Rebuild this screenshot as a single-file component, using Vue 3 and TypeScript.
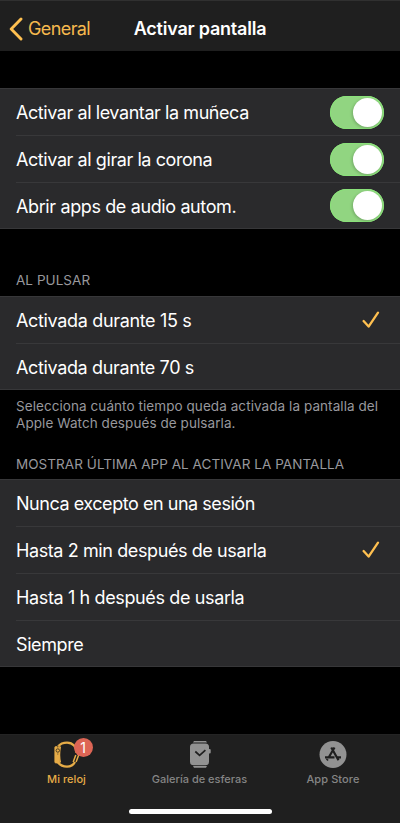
<script setup lang="ts">
import { ref } from 'vue'

interface Row { label: string; spacing: number }

const toggles = ref([
  { label: 'Activar al levantar la muñeca', spacing: -0.43, on: true },
  { label: 'Activar al girar la corona', spacing: -0.42, on: true },
  { label: 'Abrir apps de audio autom.', spacing: -0.38, on: true },
])
const durations: Row[] = [
  { label: 'Activada durante 15 s', spacing: -0.34 },
  { label: 'Activada durante 70 s', spacing: -0.36 },
]
const lastApp: Row[] = [
  { label: 'Nunca excepto en una sesión', spacing: -0.46 },
  { label: 'Hasta 2 min después de usarla', spacing: -0.4 },
  { label: 'Hasta 1 h después de usarla', spacing: -0.37 },
  { label: 'Siempre', spacing: -0.4 },
]
const duration = ref(0)
const resume = ref(1)
</script>

<template>
  <div class="screen">
    <header class="nav">
      <a class="back">
        <svg width="14" height="24" viewBox="0 0 14 24"><path d="M12 2 2.2 12 12 22" /></svg>
        <span>General</span>
      </a>
      <h1>Activar pantalla</h1>
    </header>
    <main>
      <section class="group first">
        <div v-for="t in toggles" :key="t.label" class="row" @click="t.on = !t.on">
          <span class="label" :style="{ letterSpacing: t.spacing + 'px' }">{{ t.label }}</span>
          <span class="switch" :class="{ on: t.on }"><i></i></span>
        </div>
      </section>
      <h2 class="h-press">AL PULSAR</h2>
      <section class="group">
        <div v-for="(r, i) in durations" :key="r.label" class="row" @click="duration = i">
          <span class="label" :style="{ letterSpacing: r.spacing + 'px' }">{{ r.label }}</span>
          <svg v-if="duration === i" class="check" width="18" height="18" viewBox="0 0 18 18"><path d="m1.6 10 5 5.6L16 1.6" /></svg>
        </div>
      </section>
      <p class="note">Selecciona cuánto tiempo queda activada la pantalla del<br>Apple Watch después de pulsarla.</p>
      <h2 class="h-last">MOSTRAR ÚLTIMA APP AL ACTIVAR LA PANTALLA</h2>
      <section class="group">
        <div v-for="(r, i) in lastApp" :key="r.label" class="row" @click="resume = i">
          <span class="label" :style="{ letterSpacing: r.spacing + 'px' }">{{ r.label }}</span>
          <svg v-if="resume === i" class="check" width="18" height="18" viewBox="0 0 18 18"><path d="m1.6 10 5 5.6L16 1.6" /></svg>
        </div>
      </section>
    </main>
    <footer>
      <nav class="tabs">
        <a class="tab active">
          <span class="icon">
            <svg width="28" height="28" viewBox="0 0 28 28" fill="none" stroke="#e6ac47">
              <path d="M5 6.500C7.500 3.500 10.500 2.600 14 2.600c6 0 9.600 4.500 9.600 10.500M5 22.500c2.500 3 5.500 4.100 9 4.100 4 0 6.500-1.800 8-4.600" stroke-width="2.300" />
              <path d="M7.500 6.500c-1.300 5-1.300 11 0 16" stroke-width="1.200" />
              <rect x="1.800" y="6.500" width="5" height="16.500" rx="1" fill="#e6ac47" stroke-width=".7" />
              <circle cx="4.800" cy="10.500" r="1.700" fill="#e6ac47" stroke="#3c321f" stroke-width=".9" />
              <path d="M4.800 5.500v2M4.800 13.500v1" stroke="#3c321f" stroke-width=".8" />
              <path d="m22.800 15-2.600 7M25.700 15l-2.600 7" stroke-width="1.500" />
            </svg>
            <b class="badge">1</b>
          </span>
          <span class="name mine">Mi reloj</span>
        </a>
        <a class="tab">
          <span class="icon">
            <svg width="28" height="28" viewBox="0 0 28 28" fill="#929292">
              <path d="M8 1h12l1 1.500H7zM7 26h14l-1 1.700H8z" />
              <rect x="4" y="3.500" width="19" height="21.700" rx="3.600" />
              <rect x="22.500" y="9" width="2.200" height="4.500" rx="1" />
              <path d="m9.300 11.500 4.300 3.800 5.800-5.200" fill="none" stroke="#1f1f1f" stroke-width="1.700" />
            </svg>
          </span>
          <span class="name gallery">Galería de esferas</span>
        </a>
        <a class="tab">
          <span class="icon">
            <svg width="28" height="28" viewBox="0 0 28 28">
              <circle cx="14" cy="14.500" r="13.500" fill="#929292" />
              <path d="m15.500 7.500-5.700 9.800M8.700 19.100l-.8 1.200M12.300 7.500l7.200 12.700M6 17.300h9.500M18.500 17.300H22" fill="none" stroke="#1f1f1f" stroke-width="2.200" />
            </svg>
          </span>
          <span class="name">App Store</span>
        </a>
      </nav>
      <div class="home"></div>
    </footer>
  </div>
</template>

<style>
body { margin: 0; background: #000; }
</style>

<style scoped>
.screen { width: 400px; height: 823px; display: flex; flex-direction: column; overflow: hidden; background: #000; color: #fff; font-family: Inter, "Liberation Sans", sans-serif; box-sizing: border-box; }
.nav { height: 51px; flex: none; box-sizing: border-box; display: grid; grid-template-columns: 1fr auto 1fr; align-items: center; padding: 5px 9px 0; background: #1f1f1f; border-top: 1px solid #303030; }
.back { display: flex; align-items: center; gap: 5px; color: #f6b94e; font-size: 18px; letter-spacing: -.6px; }
.back svg, .check { fill: none; stroke: #ffc050; stroke-width: 2.9; stroke-linecap: round; stroke-linejoin: round; }
h1 { margin: 0; font-size: 18px; font-weight: 600; letter-spacing: -.22px; white-space: nowrap; }
main { flex: 1; }
.group { background: #2a2a2c; border-top: 1px solid #373739; border-bottom: 1px solid #373739; box-sizing: border-box; }
.first { margin-top: 37px; }
.row { height: 47px; box-sizing: border-box; display: flex; align-items: center; justify-content: space-between; margin-left: 16px; padding-right: 16px; border-bottom: 1px solid #38383a; }
.row:last-child { height: 45px; border-bottom: 0; }
.label { margin-top: 2px; font-size: 18px; line-height: 24px; white-space: nowrap; }
.switch { width: 54px; height: 33px; box-sizing: border-box; padding: 2px; border-radius: 17px; display: flex; background: #48484a; }
.switch.on { justify-content: flex-end; background: #91d581; box-shadow: inset 0 0 0 1px #8ae27a; }
.switch i { width: 29px; height: 29px; border-radius: 50%; background: #fff; box-shadow: -1px 1px 3px #0003; }
.check { margin-right: 4px; stroke-width: 2.3; }
h2 { margin: 0; padding-left: 16px; font-size: 13.5px; line-height: 18px; font-weight: 400; letter-spacing: .05px; color: #98989d; white-space: nowrap; }
.h-press { padding-top: 42px; padding-bottom: 7px; }
.note { margin: 0; padding: 8px 16px 0; color: #98989d; font-size: 13.5px; line-height: 17px; letter-spacing: .07px; white-space: nowrap; }
.h-last { padding-top: 23px; padding-bottom: 6px; }
footer { height: 89px; flex: none; box-sizing: border-box; background: #1f1f1f; border-top: 1px solid #242424; display: flex; flex-direction: column; justify-content: space-between; align-items: center; padding: 5px 0 9px; }
.tabs { width: 400px; display: grid; grid-template-columns: 133px 133px 134px; }
.tab { display: flex; flex-direction: column; align-items: center; gap: 4px; color: #858585; }
.tab.active { color: #e6ac47; }
.icon { position: relative; width: 28px; height: 28px; }
.icon svg { display: block; }
.badge { position: absolute; left: 21px; top: -2px; width: 19px; height: 19px; border-radius: 50%; background: #dd6555; color: #fff; font-size: 14px; font-weight: 400; line-height: 19px; text-align: center; }
.name { font-size: 11px; line-height: 14px; font-weight: 500; letter-spacing: .1px; white-space: nowrap; }
.mine { letter-spacing: .05px; }
.gallery { letter-spacing: 0; }
.home { width: 143px; height: 5px; border-radius: 3px; background: #fff; }
</style>
